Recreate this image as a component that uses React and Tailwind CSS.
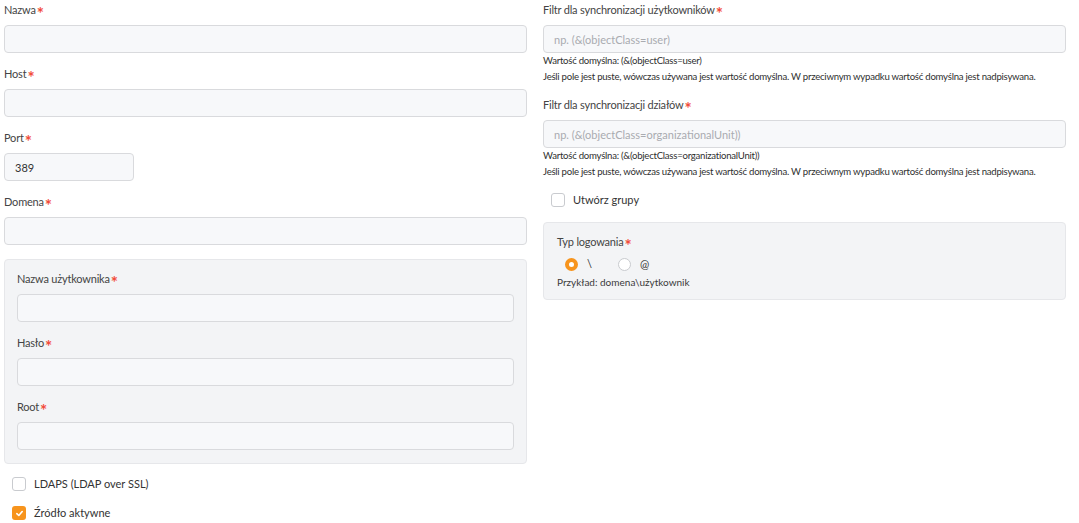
import React from 'react'

const Star = () => <span className="text-[#f24b3a] font-bold text-[17px] leading-none relative top-[3px] ml-[1px]">*</span>

const Label = ({ children, required = true }) => (
    <div className="h-5 flex items-center text-[11px] text-[#444] tracking-[-0.2px]">
        {children}
        {required && <Star />}
    </div>
)

const Input = ({ className = 'w-full', value, placeholder }) => (
    <input
        readOnly
        defaultValue={value}
        placeholder={placeholder}
        className={`${className} h-7 mt-[5px] bg-[#f7f8fa] border border-[#d9dadd] rounded-[4px] px-[10px] text-[11px] text-[#333] placeholder:text-[#a9abb0] outline-none`}
    />
)

const Field = ({ label, value, placeholder, inputClass }) => (
    <div className="pb-[11px]">
        <Label>{label}</Label>
        <Input value={value} placeholder={placeholder} className={inputClass} />
    </div>
)

const Checkbox = ({ checked, children }) => (
    <div className="flex items-center gap-2 h-5">
        {checked ? (
            <span className="w-[14px] h-[14px] rounded-[3px] bg-[#f7941d] flex items-center justify-center">
                <svg width="9" height="9" viewBox="0 0 10 10"><path d="M2 5.2 L4.2 7.2 L8 2.8" stroke="white" strokeWidth="1.8" fill="none" strokeLinecap="round" strokeLinejoin="round" /></svg>
            </span>
        ) : (
            <span className="w-[14px] h-[14px] rounded-[3px] bg-white border border-[#c9cbcf]"></span>
        )}
        <span className="text-[11px] text-[#333]">{children}</span>
    </div>
)

const Help = ({ children }) => (
    <div className="text-[9.6px] leading-4 text-[#2f2f2f] tracking-[-0.25px] whitespace-nowrap">{children}</div>
)

export default function App() {
    return (
        <div className="w-[1079px] h-[523px] bg-white overflow-hidden pl-1 pr-[13px] flex gap-4" style={{ fontFamily: 'Lato, "Open Sans", sans-serif' }}>

            <div className="flex-1 min-w-0 flex flex-col">
                <Field label="Nazwa" />
                <Field label="Host" />
                <Field label="Port" value="389" inputClass="w-[130px]" />
                <Field label="Domena" />

                <div className="mt-[3px] bg-[#f3f4f6] border border-[#e6e7ea] rounded-[4px] px-3 pt-[9px] pb-[2px]">
                    <Field label="Nazwa użytkownika" />
                    <Field label="Hasło" />
                    <Field label="Root" />
                </div>

                <div className="pl-2 mt-[10px] flex flex-col gap-[9px]">
                    <Checkbox>LDAPS (LDAP over SSL)</Checkbox>
                    <Checkbox checked>Źródło aktywne</Checkbox>
                </div>
            </div>

            <div className="flex-1 min-w-0 flex flex-col">
                <Label>Filtr dla synchronizacji użytkowników</Label>
                <Input placeholder="np. (&(objectClass=user)" />
                <Help>Wartość domyślna: (&(objectClass=user)</Help>
                <Help>Jeśli pole jest puste, wówczas używana jest wartość domyślna. W przeciwnym wypadku wartość domyślna jest nadpisywana.</Help>

                <div className="mt-[10px]">
                    <Label>Filtr dla synchronizacji działów</Label>
                </div>
                <Input placeholder="np. (&(objectClass=organizationalUnit))" />
                <Help>Wartość domyślna: (&(objectClass=organizationalUnit))</Help>
                <Help>Jeśli pole jest puste, wówczas używana jest wartość domyślna. W przeciwnym wypadku wartość domyślna jest nadpisywana.</Help>

                <div className="pl-2 mt-[10px]">
                    <Checkbox>Utwórz grupy</Checkbox>
                </div>

                <div className="mt-3 bg-[#f3f4f6] border border-[#e6e7ea] rounded-[4px] px-[13px] pt-[9px] pb-[11px]">
                    <Label>Typ logowania</Label>
                    <div className="flex items-center h-[24px] pl-2">
                        <span className="w-[13px] h-[13px] rounded-full border-[4px] border-[#f7941d] bg-white"></span>
                        <span className="ml-[9px] text-[11px] text-[#333] w-[31px]">\</span>
                        <span className="w-[13px] h-[13px] rounded-full border border-[#c9cbcf] bg-white"></span>
                        <span className="ml-[9px] text-[11px] text-[#333]">@</span>
                    </div>
                    <div className="text-[10px] leading-3 text-[#3a3a3a]">Przykład: domena\użytkownik</div>
                </div>
            </div>

        </div>
    )
}
